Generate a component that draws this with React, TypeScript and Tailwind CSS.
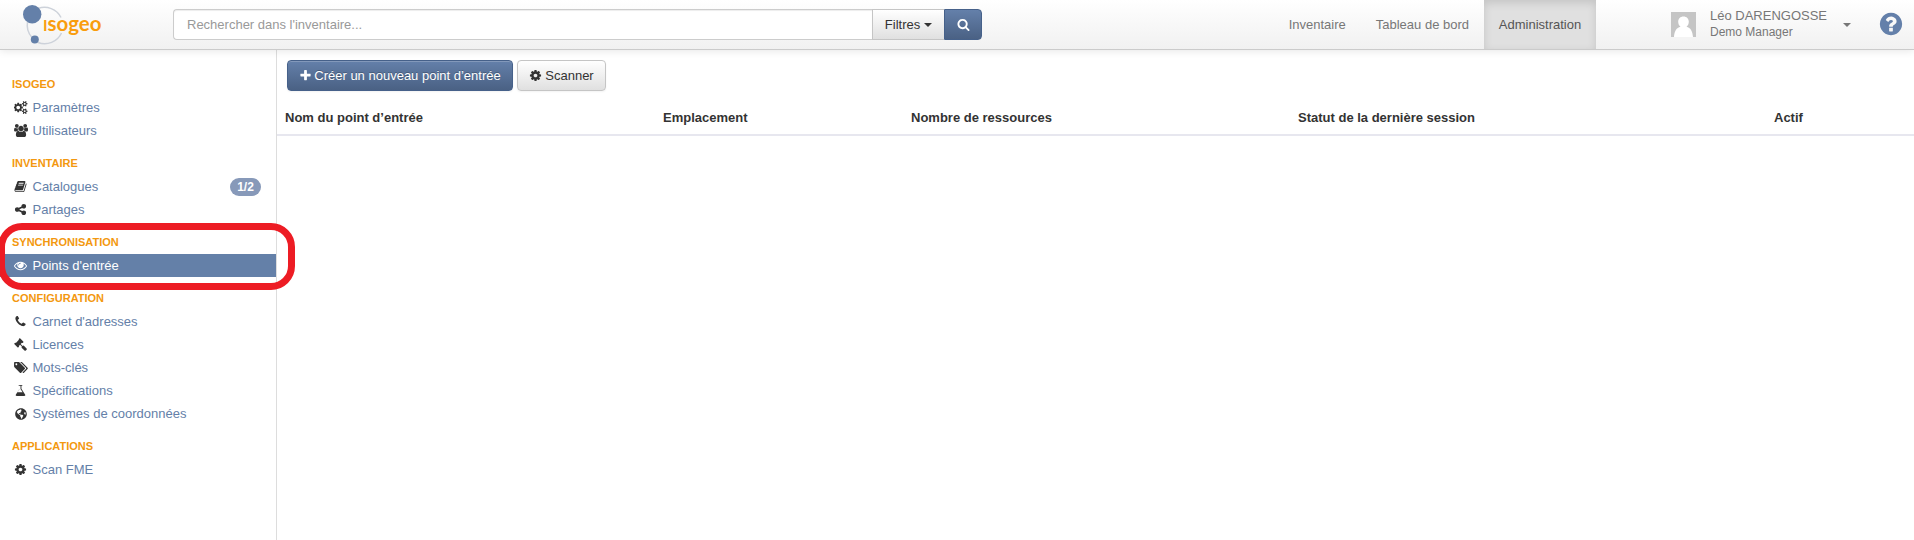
import type { ReactNode } from "react";
import { FaGlobeAmericas } from "react-icons/fa";

const paths = {
  cog: "M1152 896q0-106-75-181t-181-75-181 75-75 181 75 181 181 75 181-75 75-181zm512-109v222q0 12-8 23t-20 13l-185 28q-19 54-39 91 35 50 107 138 10 12 10 25t-9 23q-27 37-99 108t-94 71q-12 0-26-9l-138-108q-44 23-91 38-16 136-29 186-7 28-36 28h-222q-14 0-24.5-8.5t-11.5-21.5l-28-184q-49-16-90-37l-141 107q-10 9-25 9-14 0-25-11-126-114-165-168-7-10-7-23 0-12 8-23 15-21 51-66.5t54-70.5q-27-50-41-99l-183-27q-13-2-21-12.5t-8-23.5v-222q0-12 8-23t19-13l186-28q14-46 39-92-40-57-107-138-10-12-10-24 0-10 9-23 26-36 98.5-107.5t94.5-71.5q13 0 26 10l138 107q44-23 91-38 16-136 29-186 7-28 36-28h222q14 0 24.5 8.5t11.5 21.5l28 184q49 16 90 37l142-107q9-9 24-9 13 0 25 10 129 119 165 170 7 8 7 22 0 12-8 23-15 21-51 66.5t-54 70.5q26 50 41 98l183 28q13 2 21 12.5t8 23.5z",
  plus: "M1600 736v192q0 40-28 68t-68 28h-416v416q0 40-28 68t-68 28h-192q-40 0-68-28t-28-68v-416h-416q-40 0-68-28t-28-68v-192q0-40 28-68t68-28h416v-416q0-40 28-68t68-28h192q40 0 68 28t28 68v416h416q40 0 68 28t28 68z",
  search: "M1216 832q0-185-131.5-316.5t-316.5-131.5-316.5 131.5-131.5 316.5 131.5 316.5 316.5 131.5 316.5-131.5 131.5-316.5zm512 832q0 52-38 90t-90 38q-54 0-90-38l-343-342q-179 124-399 124-143 0-273.5-55.5t-225-150-150-225-55.5-273.5 55.5-273.5 150-225 225-150 273.5-55.5 273.5 55.5 225 150 150 225 55.5 273.5q0 220-124 399l343 343q37 37 37 90z",
  help: "M1024 1376v-192q0-14-9-23t-23-9h-192q-14 0-23 9t-9 23v192q0 14 9 23t23 9h192q14 0 23-9t9-23zm256-672q0-88-55.5-163t-138.5-116-170-41q-243 0-371 213-15 24 8 42l132 100q7 6 19 6 16 0 25-12 53-68 86-92 34-24 86-24 48 0 85.5 26t37.5 59q0 38-20 61t-68 45q-63 28-115.5 86.5t-52.5 125.5v36q0 14 9 23t23 9h192q14 0 23-9t9-23q0-19 21.5-49.5t54.5-49.5q32-18 49-28.5t46-35 44.5-48 28-60.5 12.5-81zm384 192q0 209-103 385.5t-279.5 279.5-385.5 103-385.5-103-279.5-279.5-103-385.5 103-385.5 279.5-279.5 385.5-103 385.5 103 279.5 279.5 103 385.5z",
  eye: "M1664 960q-152-236-381-353 61 104 61 225 0 185-131.5 316.5t-316.5 131.5-316.5-131.5-131.5-316.5q0-121 61-225-229 117-381 353 133 205 333.5 326.5t434.5 121.5 434.5-121.5 333.5-326.5zm-720-384q0-20-14-34t-34-14q-125 0-214.5 89.5t-89.5 214.5q0 20 14 34t34 14 34-14 14-34q0-86 61-147t147-61q20 0 34-14t14-34zm848 384q0 34-20 69-140 230-376.5 368.5t-499.5 138.5-499.5-139-376.5-368q-20-35-20-69t20-69q140-229 376.5-368t499.5-139 499.5 139 376.5 368q20 35 20 69z",
  share: "M1344 1024q133 0 226.5 93.5t93.5 226.5-93.5 226.5-226.5 93.5-226.5-93.5-93.5-226.5q0-12 2-34l-360-180q-92 86-218 86-133 0-226.5-93.5t-93.5-226.5 93.5-226.5 226.5-93.5q126 0 218 86l360-180q-2-22-2-34 0-133 93.5-226.5t226.5-93.5 226.5 93.5 93.5 226.5-93.5 226.5-226.5 93.5q-126 0-218-86l-360 180q2 22 2 34t-2 34l360 180q92-86 218-86z",
  tags: "M448 448q0-53-37.5-90.5t-90.5-37.5-90.5 37.5-37.5 90.5 37.5 90.5 90.5 37.5 90.5-37.5 37.5-90.5zm1067 576q0 53-37 90l-491 492q-39 37-91 37-53 0-90-37l-715-716q-38-37-64.5-101t-26.5-117v-416q0-52 38-90t90-38h416q53 0 117 26.5t102 64.5l715 714q37 39 37 91zm384 0q0 53-37 90l-491 492q-39 37-91 37-36 0-59-14t-53-45l470-470q37-37 37-90 0-52-37-91l-715-714q-38-38-102-64.5t-117-26.5h224q53 0 117 26.5t102 64.5l715 714q37 39 37 91z",
  phone: "M1600 1240q0 27-10 70.5t-21 68.5q-21 50-122 106-94 51-186 51-27 0-52.5-3.5t-57.5-12.5-47.5-14.5-55.5-20.5-49-18q-98-35-175-83-128-79-264.5-215.5t-215.5-264.5q-48-77-83-175-3-9-18-49t-20.5-55.5-14.5-47.5-12.5-57.5-3.5-52.5q0-92 51-186 56-101 106-122 25-11 68.5-21t70.5-10q14 0 21 3 18 6 53 76 11 19 30 54t35 63.5 31 53.5q3 4 17.5 25t21.5 35.5 7 28.5q0 20-28.5 50t-62 55-62 53-28.5 46q0 9 5 22.5t8.5 20.5 14 24 11.5 19q76 137 174 235t235 174q2 1 19 11.5t24 14 20.5 8.5 22.5 5q18 0 46-28.5t53-62 55-62 50-28.5q14 0 28.5 7t35.5 21.5 25 17.5q25 15 53.5 31t63.5 35 54 30q70 35 76 53 3 7 3 21z",
  flask: "M1527 1447q56 89 21.5 153t-140.5 64h-1024q-106 0-140.5-64t21.5-153l503-793v-399h-64q-26 0-45-19t-19-45 19-45 45-19h384q26 0 45 19t19 45-19 45-45 19h-64v399zm-779-725l-272 429h712l-272-429-20-31v-436h-128v436z",
  book: "M1703 478q40 57 18 129l-275 906q-19 64-76.5 107.5t-122.5 43.5h-923q-77 0-148.5-53.5t-99.5-131.5q-24-67-2-127 0-4 3-27t4-37q1-8-3-21.5t-3-19.5q2-11 8-21t16.5-23.5 16.5-23.5q23-38 45-91.5t30-91.5q3-10 .5-30t-.5-28q3-11 17-28t17-23q21-36 42-92t25-90q1-9-2.5-32t.5-28q4-13 22-30.5t22-22.5q19-26 42.5-84.5t27.5-96.5q1-8-3-25.5t-2-26.5q2-8 9-18t18-23 17-21q8-12 16.5-30.5t15-35 16-36 19.5-32 26.5-23.5 36-11.5 47.5 5.5l-1 3q38-9 51-9h761q74 0 114 56t18 130l-274 906q-36 119-71.5 153.5t-128.5 34.5h-869q-27 0-38 15-11 16-1 43 24 70 144 70h923q29 0 56-15.5t35-41.5l300-987q7-22 5-57 38 15 59 43zm-1064 2q-4 13 2 22.5t20 9.5h608q13 0 25.5-9.5t16.5-22.5l21-64q4-13-2-22.5t-20-9.5h-608q-13 0-25.5 9.5t-16.5 22.5zm-83 256q-4 13 2 22.5t20 9.5h608q13 0 25.5-9.5t16.5-22.5l21-64q4-13-2-22.5t-20-9.5h-608q-13 0-25.5 9.5t-16.5 22.5z",
  gavel: "M1771 1536q0 53-37 90l-107 108q-39 37-91 37-53 0-90-37l-363-364q-38-36-38-90 0-53 43-96l-256-256-126 126q-14 14-34 14t-34-14q2 2 12.5 12t12.5 13 10 11.5 10 13.5 6 13.5 5.5 16.5 1.5 18q0 38-28 68-3 3-16.5 18t-19 20.5-18.5 16.5-22 15.5-22 9-26 4.5q-40 0-68-28l-408-408q-28-28-28-68 0-13 4.5-26t9-22 15.5-22 16.5-18.5 20.5-19 18-16.5q30-28 68-28 10 0 18 1.5t16.5 5.5 13.5 6 13.5 10 11.5 10 13 12.5 12 12.5q-14-14-14-34t14-34l348-348q14-14 34-14t34 14q-2-2-12.5-12t-12.5-13-10-11.5-10-13.5-6-13.5-5.5-16.5-1.5-18q0-38 28-68 3-3 16.5-18t19-20.5 18.5-16.5 22-15.5 22-9 26-4.5q40 0 68 28l408 408q28 28 28 68 0 13-4.5 26t-9 22-15.5 22-16.5 18.5-20.5 19-18 16.5q-30 28-68 28-10 0-18-1.5t-16.5-5.5-13.5-6-13.5-10-11.5-10-13-12.5-12-12.5q14 14 14 34t-14 34l-126 126 256 256q43-43 96-43 52 0 91 37l363 363q37 39 37 91z",
  cogs: "M832 896q0-106-75-181t-181-75-181 75-75 181 75 181 181 75 181-75 75-181zm768 512q0-52-38-90t-90-38-90 38-38 90q0 53 37.5 90.5t90.5 37.5 90.5-37.5 37.5-90.5zm0-1024q0-52-38-90t-90-38-90 38-38 90q0 53 37.5 90.5t90.5 37.5 90.5-37.5 37.5-90.5zm-384 421v185q0 10-7 19.5t-16 10.5l-155 24q-11 35-32 76 34 48 90 115 7 11 7 20 0 12-7 19-23 30-82.5 89.5t-78.5 59.5q-11 0-21-7l-115-90q-37 19-77 31-11 108-23 155-7 24-30 24h-186q-11 0-20-7.5t-10-17.5l-23-153q-34-10-75-31l-118 89q-7 7-20 7-11 0-21-8-144-133-144-160 0-9 7-19 10-14 41-53t47-61q-23-44-35-82l-152-24q-10-1-17-9.5t-7-19.5v-185q0-10 7-19.5t16-10.5l155-24q11-35 32-76-34-48-90-115-7-11-7-20 0-12 7-20 22-30 82-89t79-59q11 0 21 7l115 90q34-18 77-32 11-108 23-154 7-24 30-24h186q11 0 20 7.5t10 17.5l23 153q34 10 75 31l118-89q8-7 20-7 11 0 21 8 144 133 144 160 0 8-7 19-12 16-42 54t-45 60q23 48 34 82l152 23q10 2 17 10.5t7 19.5zm640 533v140q0 16-149 31-12 27-30 52 51 113 51 138 0 4-4 7-122 71-124 71-8 0-46-47t-52-68q-20 2-30 2t-30-2q-14 21-52 68t-46 47q-2 0-124-71-4-3-4-7 0-25 51-138-18-25-30-52-149-15-149-31v-140q0-16 149-31 13-29 30-52-51-113-51-138 0-4 4-7 4-2 35-20t59-34 30-16q8 0 46 46.5t52 67.5q20-2 30-2t30 2q51-71 92-112l6-2q4 0 124 70 4 3 4 7 0 25-51 138 17 23 30 52 149 15 149 31zm0-1024v140q0 16-149 31-12 27-30 52 51 113 51 138 0 4-4 7-122 71-124 71-8 0-46-47t-52-68q-20 2-30 2t-30-2q-14 21-52 68t-46 47q-2 0-124-71-4-3-4-7 0-25 51-138-18-25-30-52-149-15-149-31v-140q0-16 149-31 13-29 30-52-51-113-51-138 0-4 4-7 4-2 35-20t59-34 30-16q8 0 46 46.5t52 67.5q20-2 30-2t30 2q51-71 92-112l6-2q4 0 124 70 4 3 4 7 0 25-51 138 17 23 30 52 149 15 149 31z",
  users: "M593 896q-162 5-265 128h-134q-82 0-138-40.5t-56-118.5q0-353 124-353 6 0 43.5 21t97.5 42.5 119 21.5q67 0 133-23-5 37-5 66 0 159 93 293zm1071 637q0 120-73 189.5t-194 69.5h-874q-121 0-194-69.5t-73-189.5q0-53 3.5-103.5t14-109 26.5-108.5 43-97.5 62-81 85.5-53.5 111.5-20q10 0 43 21.5t73 48 107 48 135 21.5 135-21.5 107-48 73-48 43-21.5q61 0 111.5 20t85.5 53.5 62 81 43 97.5 26.5 108.5 14 109 3.5 103.5zm-1024-1277q0 106-75 181t-181 75-181-75-75-181 75-181 181-75 181 75 75 181zm704 384q0 159-112.5 271.5t-271.5 112.5-271.5-112.5-112.5-271.5 112.5-271.5 271.5-112.5 271.5 112.5 112.5 271.5zm576 225q0 78-56 118.5t-138 40.5h-134q-103-123-265-128 93-134 93-293 0-29-5-66 66 23 133 23 59 0 119-21.5t97.5-42.5 43.5-21q124 0 124 353zm-128-609q0 106-75 181t-181 75-181-75-75-181 75-181 181-75 181 75 75 181z",
};

type IconName = keyof typeof paths;

function Icon({ name, className, box = "0 0 1792 1792" }: { name: IconName; className: string; box?: string }) {
  return (
    <svg viewBox={box} className={className} fill="currentColor">
      <path d={paths[name]} />
    </svg>
  );
}

const square = "h-[13px] w-[13px]";
const wide = "h-[13px] w-[14px]";

type Item = { label: string; icon: ReactNode; badge?: string; active?: boolean };

const groups: { title: string; items: Item[] }[] = [
  {
    title: "ISOGEO",
    items: [
      { label: "Paramètres", icon: <Icon name="cogs" className={wide} box="0 0 1920 1792" /> },
      { label: "Utilisateurs", icon: <Icon name="users" className={wide} box="0 0 1920 1792" /> },
    ],
  },
  {
    title: "INVENTAIRE",
    items: [
      { label: "Catalogues", icon: <Icon name="book" className={square} />, badge: "1/2" },
      { label: "Partages", icon: <Icon name="share" className={square} /> },
    ],
  },
  {
    title: "SYNCHRONISATION",
    items: [{ label: "Points d'entrée", icon: <Icon name="eye" className={square} />, active: true }],
  },
  {
    title: "CONFIGURATION",
    items: [
      { label: "Carnet d'adresses", icon: <Icon name="phone" className={square} /> },
      { label: "Licences", icon: <Icon name="gavel" className={square} /> },
      { label: "Mots-clés", icon: <Icon name="tags" className={wide} box="0 0 1920 1792" /> },
      { label: "Spécifications", icon: <Icon name="flask" className={square} /> },
      { label: "Systèmes de coordonnées", icon: <FaGlobeAmericas className="h-3 w-3" /> },
    ],
  },
  {
    title: "APPLICATIONS",
    items: [{ label: "Scan FME", icon: <Icon name="cog" className={square} /> }],
  },
];

function Logo() {
  return (
    <svg className="ml-5 h-[46px] w-[86px] shrink-0" viewBox="20 0 86 46">
      <path d="M38 6.5A18.5 18.5 0 0 1 61 15.5M61.5 31A18.5 18.5 0 0 1 38 40.5M32 35.5A18.5 18.5 0 0 1 27.5 20" fill="none" stroke="#cdd2da" strokeWidth="1.5" />
      <circle cx="32.2" cy="12.3" r="9.2" fill="#6480a9" />
      <circle cx="34.8" cy="37.4" r="4" fill="#6480a9" />
      <text x="43" y="29" textLength="58.5" lengthAdjust="spacingAndGlyphs" fontSize="20" fontWeight="700" fontFamily="Lato, sans-serif" fill="#f99d0d">
        <tspan fontSize="15">I</tspan>sogeo
      </text>
    </svg>
  );
}

function Header() {
  return (
    <header className="relative z-10 flex h-[50px] items-center border-b border-[#cbcbcb] bg-linear-to-b from-white to-[#f1f1f1] shadow-[0_1px_8px_rgba(0,0,0,0.1)]">
      <Logo />
      <div className="ml-[67px] flex h-[31px] w-[809px] shrink-0">
        <div className="flex flex-1 items-center rounded-l border border-r-0 border-[#cccccc] bg-white pl-[13px] text-[#999999] shadow-[inset_0_1px_1px_rgba(0,0,0,0.075)]">
          Rechercher dans l'inventaire...
        </div>
        <button className="flex w-[72px] items-center justify-center gap-1 border border-r-0 border-[#c5c5c5] bg-linear-to-b from-white to-[#e0e0e0] text-[#333333]">
          Filtres
          <svg className="h-1 w-2" viewBox="0 0 8 4" fill="#333333">
            <path d="M0 0h8L4 4z" />
          </svg>
        </button>
        <button className="flex w-[38px] items-center justify-center rounded-r border border-[#46618a] bg-linear-to-b from-[#6480aa] to-[#4a6184] text-white">
          <Icon name="search" className="h-[13px] w-[13px]" />
        </button>
      </div>
      <nav className="ml-auto flex h-full items-center text-[#777777]">
        <span className="px-[15px]">Inventaire</span>
        <span className="px-[15px]">Tableau de bord</span>
        <span className="flex h-full w-28 items-center justify-center bg-[#e0e0e0] text-[#555555] shadow-[inset_0_3px_8px_rgba(0,0,0,0.125)]">
          Administration
        </span>
      </nav>
      <div className="ml-[75px] flex h-full w-[243px] items-center text-[#777777]">
        <svg className="h-[25px] w-[25px] shrink-0" viewBox="0 0 25 25">
          <path d="M0 0h25v25H0z" fill="#c5c5c5" />
          <path d="M12.5 4.5c3.2 0 5.3 2.2 5.3 5.3 0 2-.9 4-2.3 5 4 .9 6 4.5 6.5 10.2H3c.4-5.700 2.500-9.300 6.500-10.200-1.400-1-2.300-3-2.300-5 0-3.100 2.100-5.300 5.300-5.300z" fill="#fff" />
        </svg>
        <div className="ml-[14px] w-[119px] pb-px whitespace-nowrap">
          <div className="text-[13px] leading-[17px]">Léo DARENGOSSE</div>
          <div className="text-[12px] leading-[17px]">Demo Manager</div>
        </div>
        <svg className="ml-[14px] h-1 w-2 shrink-0" viewBox="0 0 8 4" fill="#777777">
          <path d="M0 0h8L4 4z" />
        </svg>
        <Icon name="help" className="mb-[2px] ml-[27px] h-[26px] w-[26px] shrink-0 text-[#6480aa]" />
      </div>
    </header>
  );
}

function Sidebar() {
  return (
    <aside className="relative w-[277px] shrink-0 border-r border-[#dddddd] pt-[23px]">
      {groups.map((group) => (
        <section key={group.title} className="mb-[10px]">
          <h3 className="h-[23px] pl-3 text-[11px] leading-[23px] font-bold text-[#f3980f]">{group.title}</h3>
          {group.items.map((item) => (
            <a
              key={item.label}
              className={
                item.active
                  ? "flex h-[23px] items-center bg-[#6480a8] pl-3 text-white"
                  : "flex h-[23px] items-center pl-3 text-[#6480a8]"
              }
            >
              <span className={item.active ? "flex w-[17px] justify-center" : "flex w-[17px] justify-center text-[#333333]"}>
                {item.icon}
              </span>
              <span className="ml-[3.5px]">{item.label}</span>
              {item.badge && (
                <span className="mr-[15px] ml-auto flex h-[18px] w-[31px] items-center justify-center rounded-[9px] bg-[#8799b9] text-[12px] font-bold text-white">
                  {item.badge}
                </span>
              )}
            </a>
          ))}
        </section>
      ))}
      <div className="absolute top-[173px] -left-[2px] h-[67px] w-[297px] rounded-[24px] border-[7px] border-[#ed1c24]" />
    </aside>
  );
}

function Content() {
  return (
    <main className="flex-1 pt-[10px]">
      <div className="flex gap-1 pl-[10px]">
        <button className="flex h-[31px] w-[226px] items-center justify-center gap-[2px] rounded border border-[#46618a] bg-linear-to-b from-[#6480aa] to-[#4a6184] text-white shadow-[inset_0_1px_0_rgba(255,255,255,0.2),0_1px_2px_rgba(0,0,0,0.05)] [text-shadow:0_-1px_0_rgba(0,0,0,0.25)]">
          <Icon name="plus" className="h-[13px] w-[13px]" />
          Créer un nouveau point d’entrée
        </button>
        <button className="flex h-[31px] w-[89px] items-center justify-center gap-[3px] rounded border border-[#c5c5c5] bg-linear-to-b from-white to-[#e0e0e0] text-[#333333] shadow-[0_1px_2px_rgba(0,0,0,0.05)]">
          <Icon name="cog" className="h-[13px] w-[13px]" />
          Scanner
        </button>
      </div>
      <div className="mt-[9px] grid h-[36px] grid-cols-[378px_248px_387px_476px_1fr] items-center border-b-2 border-[#e7e7ef] pt-[2px] pl-2 font-bold text-[#333333]">
        <span>Nom du point d’entrée</span>
        <span>Emplacement</span>
        <span>Nombre de ressources</span>
        <span>Statut de la dernière session</span>
        <span>Actif</span>
      </div>
    </main>
  );
}

export default function App() {
  return (
    <div className="flex h-[540px] flex-col overflow-hidden bg-white font-['Liberation_Sans',Arial,sans-serif] text-[13px] leading-5">
      <Header />
      <div className="flex flex-1">
        <Sidebar />
        <Content />
      </div>
    </div>
  );
}
